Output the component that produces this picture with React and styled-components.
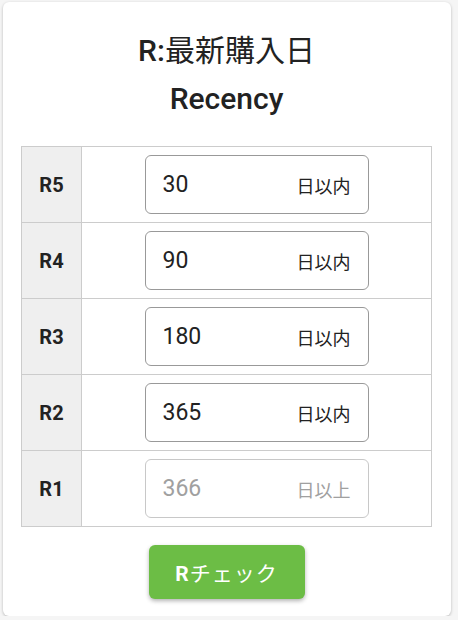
import React from "react";
import styled, { createGlobalStyle } from "styled-components";

const GlobalStyle = createGlobalStyle`
  body {
    margin: 0;
    background: #f5f5f5;
    font-family: Roboto, "Noto Sans CJK JP", sans-serif;
    color: #222;
  }
`;

const ROWS = [
  { rank: "R5", value: "30", suffix: "日以内" },
  { rank: "R4", value: "90", suffix: "日以内" },
  { rank: "R3", value: "180", suffix: "日以内" },
  { rank: "R2", value: "365", suffix: "日以内" },
  { rank: "R1", value: "366", suffix: "日以上", disabled: true },
];

const App = () => {
  return (
    <>
      <GlobalStyle />
      <Card>
        <Title>
          <Lead>R:</Lead>最新購入日
        </Title>
        <SubTitle>Recency</SubTitle>
        <Table>
          <tbody>
            {ROWS.map(row => (
              <tr key={row.rank}>
                <RankCell>{row.rank}</RankCell>
                <InputCell>
                  <Field disabled={row.disabled}>
                    <Value>{row.value}</Value>
                    <Suffix>{row.suffix}</Suffix>
                  </Field>
                </InputCell>
              </tr>
            ))}
          </tbody>
        </Table>
        <Actions>
          <CheckButton>
            <b>R</b>チェック
          </CheckButton>
        </Actions>
      </Card>
    </>
  );
};

const Card = styled.div`
  box-sizing: border-box;
  margin: 2px 0 0 3px;
  width: 448px;
  height: 614px;
  background: #fff;
  border-radius: 6px;
  box-shadow: 0 1px 3px rgba(0, 0, 0, 0.25);
  padding: 26px 19px 0 18px;
`;

const Title = styled.div`
  text-align: center;
  font-size: 30px;
  line-height: 46px;
  font-weight: 400;
  color: #222;
`;

const Lead = styled.span`
  font-weight: 500;
`;

const SubTitle = styled.div`
  text-align: center;
  font-size: 30px;
  font-weight: 500;
  line-height: 50px;
  margin-bottom: 22px;
  color: #222;
`;

const Table = styled.table`
  width: 411px;
  border-collapse: collapse;
  border: 1px solid #ccc;
`;

const RankCell = styled.td`
  width: 59px;
  height: 75px;
  padding: 0;
  background: #efefef;
  border: 1px solid #ccc;
  text-align: center;
  font-size: 20px;
  font-weight: 700;
  color: #222;
`;

const InputCell = styled.td`
  border: 1px solid #ccc;
  padding: 0;
`;

const Field = styled.div`
  box-sizing: border-box;
  width: 224px;
  height: 59px;
  margin: 0 auto;
  display: flex;
  align-items: center;
  justify-content: space-between;
  padding: 0 17px 0 17px;
  border: 1px solid ${p => (p.disabled ? "#c8c8c8" : "#999")};
  border-radius: 6px;
  color: ${p => (p.disabled ? "#a0a0a0" : "#222")};
`;

const Value = styled.span`
  font-size: 23px;
`;

const Suffix = styled.span`
  font-size: 18px;
  font-family: "Noto Sans CJK JP", sans-serif;
  font-weight: 400;
`;

const Actions = styled.div`
  display: flex;
  justify-content: center;
  padding-top: 18px;
`;

const CheckButton = styled.button`
  width: 156px;
  height: 54px;
  border: none;
  border-radius: 6px;
  background: #6cbd45;
  color: #fff;
  font-family: Roboto, "Noto Sans CJK JP", sans-serif;
  font-size: 21px;
  letter-spacing: 1px;
  box-shadow: 0 2px 4px rgba(0, 0, 0, 0.3);
  cursor: pointer;

  b {
    font-weight: 700;
  }
`;

export default App;
